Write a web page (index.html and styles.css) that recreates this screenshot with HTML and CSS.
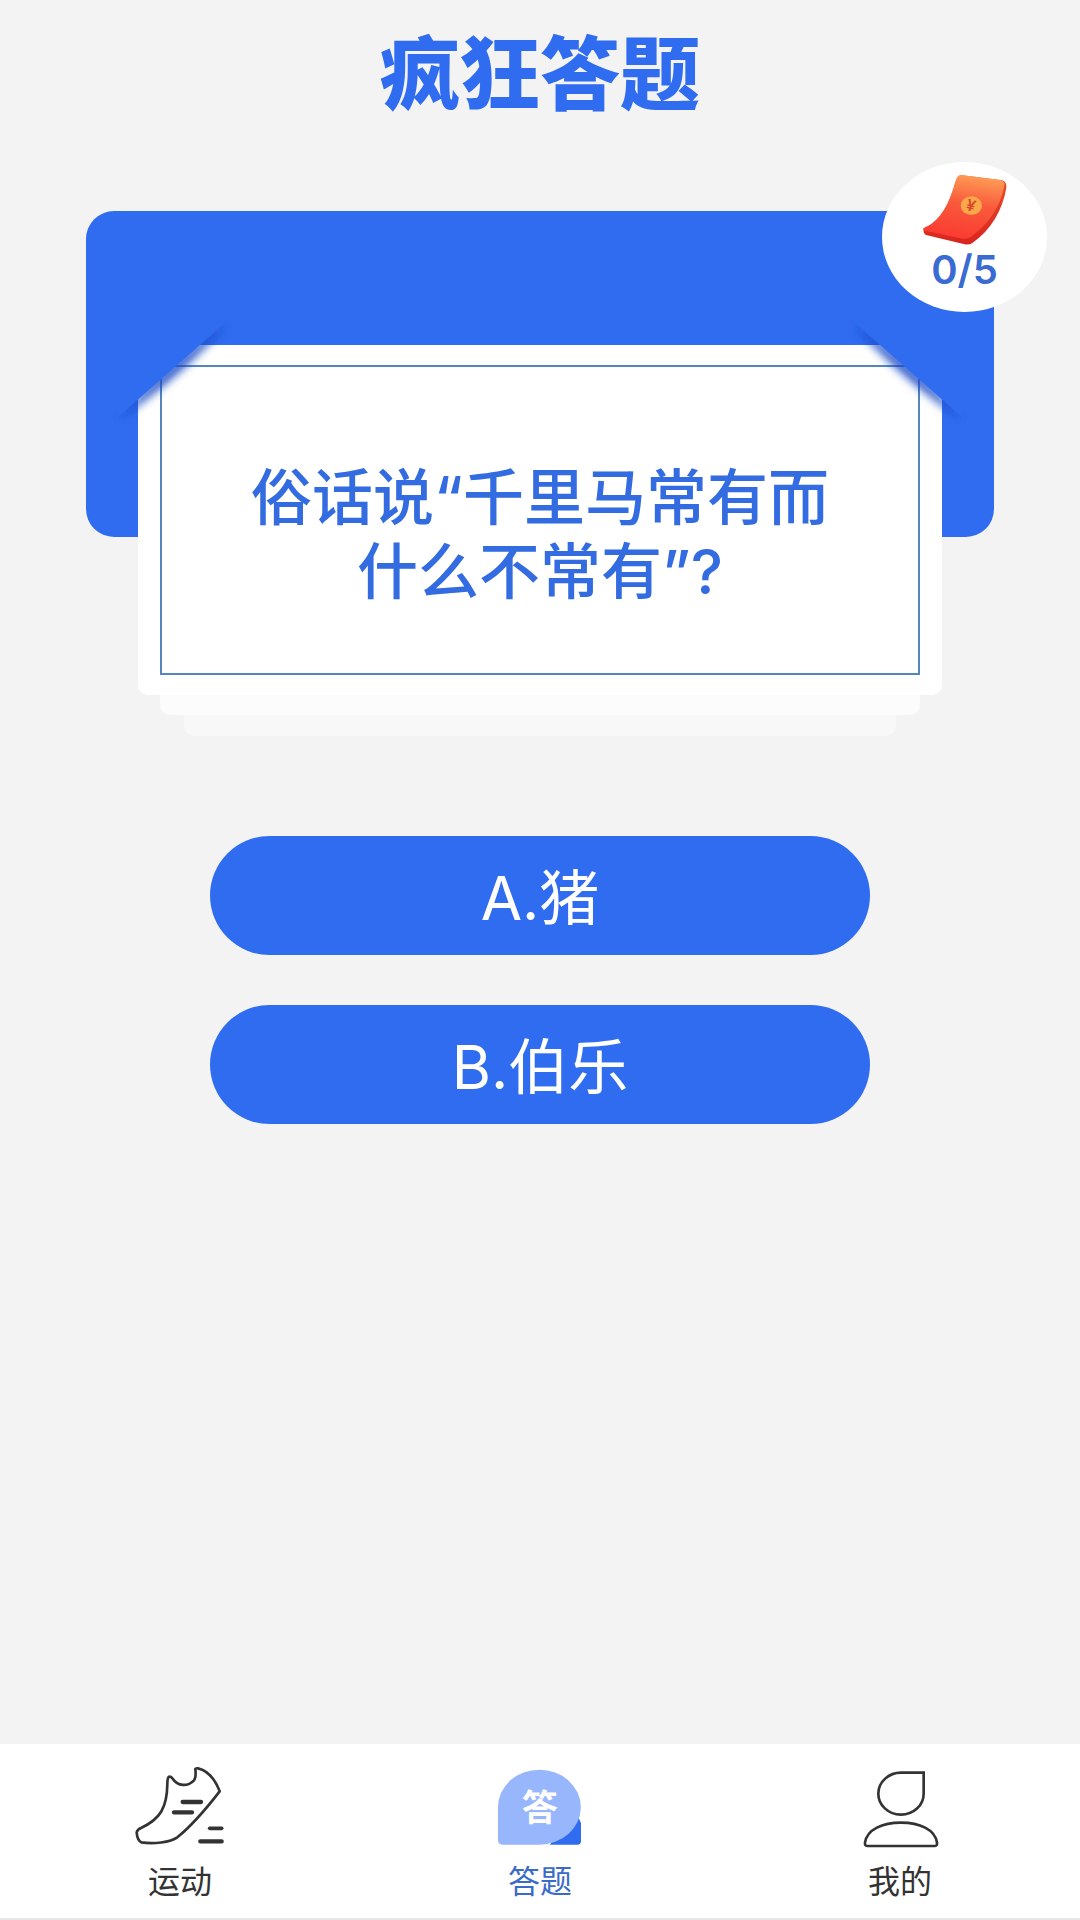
FILE: index.html
```html
<!DOCTYPE html>
<html lang="zh-CN">
<head>
    <meta charset="UTF-8">
    <meta name="viewport" content="width=device-width, initial-scale=1.0">
    <title>疯狂答题</title>
    <link rel="stylesheet" href="styles.css">
</head>
<body>
    <h1>疯狂答题</h1>

    <main>
        <section class="quiz">
            <div class="backdrop"></div>
            <div class="stack">
                <div class="card">
                    <p class="question">俗话说“千里马常有而<br>什么不常有”?</p>
                </div>
                <div class="sheet"></div>
                <div class="sheet sheet-last"></div>
            </div>

            <!-- slots that hold the card corners -->
            <svg class="corner corner-left" viewBox="0 0 130 120" aria-hidden="true">
                <defs>
                    <filter id="soft" x="-20%" y="-20%" width="140%" height="140%">
                        <feGaussianBlur stdDeviation="4"/>
                    </filter>
                </defs>
                <path d="M118 8 Q71 62 7 106 Q54 48 118 8Z" fill="#1548c4" fill-opacity="0.9" filter="url(#soft)"/>
                <path d="M115 8 L7 103 V8Z" fill="#306cf0"/>
            </svg>
            <svg class="corner corner-right" viewBox="0 0 130 120" aria-hidden="true">
                <path d="M118 8 Q71 62 7 106 Q54 48 118 8Z" fill="#1548c4" fill-opacity="0.9" filter="url(#soft)"/>
                <path d="M115 8 L7 103 V8Z" fill="#306cf0"/>
            </svg>

            <div class="badge">
                <svg class="packet" viewBox="180 70 270 222" aria-hidden="true">
                    <defs>
                        <linearGradient id="face" x1="0.6" y1="0" x2="0.4" y2="1">
                            <stop offset="0" stop-color="#ff9c55"/>
                            <stop offset="0.45" stop-color="#f95a3c"/>
                            <stop offset="1" stop-color="#fb3a31"/>
                        </linearGradient>
                        <linearGradient id="edge" x1="0" y1="0" x2="0" y2="1">
                            <stop offset="0" stop-color="#e8502c"/>
                            <stop offset="1" stop-color="#d8241f"/>
                        </linearGradient>
                    </defs>
                    <path d="M300 76 L426 92 Q441 97 439 114 C428 180 394 240 337 280 Q328 286 314 284 L198 256 Q190 253 190 236 C240 220 275 150 285 100Z" fill="url(#edge)"/>
                    <path d="M304 76 L422 91 Q436 95 433 110 C420 174 384 226 332 262 Q322 269 308 267 L196 243 Q188 239 193 234 C246 216 270 150 286 97 Q291 74 304 76Z" fill="url(#face)"/>
                    <ellipse cx="334" cy="168" rx="32" ry="28" fill="#f9a94a"/>
                    <text x="333" y="185" class="yen" transform="rotate(16 333 168)">¥</text>
                </svg>
                <span>0/5</span>
            </div>
        </section>

        <div class="answers">
            <button type="button">A.猪</button>
            <button type="button">B.伯乐</button>
        </div>
    </main>

    <nav>
        <a href="#sport">
            <svg viewBox="60 70 300 255" aria-hidden="true">
                <g fill="none" stroke="#333" stroke-width="8" stroke-linejoin="round" stroke-linecap="round">
                    <path d="M176 112 Q181 109 188 117 C203 140 233 142 252 122 Q259 114 256 88 Q257 85 264 86 C295 93 316 121 329 155 C302 190 246 257 202 293 C181 308 130 314 94 308 Q82 302 80 279 Q81 270 93 265 C152 238 171 202 172 134 Q172 116 176 112Z"/>
                    <path d="M218 187 H273 M192 218 H246 M271 305 H335" stroke-width="13"/>
                    <path d="M299 266 H335" stroke-width="11"/>
                </g>
            </svg>
            <span>运动</span>
        </a>
        <a href="#quiz" class="active">
            <svg viewBox="60 70 300 255" aria-hidden="true">
                <path d="M240 315 H322 Q333 315 333 304 V250 L326 235 L280 250Z" fill="#306cf0"/>
                <path d="M208 90 A124 112 0 0 1 208 315 H98 Q84 315 84 301 V202 A124 112 0 0 1 208 90Z" fill="#98b6fb"/>
                <text x="209" y="243" class="bubble-text">答</text>
            </svg>
            <span>答题</span>
        </a>
        <a href="#mine">
            <svg viewBox="60 70 300 255" aria-hidden="true">
                <g fill="none" stroke="#333" stroke-width="8" stroke-linejoin="round">
                    <path d="M281 99 H214 A68 63 0 1 0 281 162Z" stroke-linejoin="miter"/>
                    <path d="M111 319 Q104 319 105 309 C111 269 158 249 213 249 C268 249 315 269 321 309 Q322 319 315 319Z"/>
                </g>
            </svg>
            <span>我的</span>
        </a>
    </nav>
</body>
</html>
```
FILE: styles.css
```css
* {
    box-sizing: border-box;
}

body {
    margin: 0;
    min-height: 100vh;
    display: flex;
    flex-direction: column;
    background-color: #f3f3f3;
    font-family: Inter, "Noto Sans CJK SC", sans-serif;
}

h1 {
    margin: 24px 0 87px;
    font-size: 80px;
    line-height: 100px;
    font-weight: 900;
    text-align: center;
    color: #306cf0;
}

/* question card */
.quiz {
    position: relative;
    display: grid;
    margin: 0 86px;
}

.backdrop {
    grid-area: 1 / 1;
    height: 326px;
    border-radius: 28px;
    background-color: #306cf0;
}

.stack {
    grid-area: 1 / 1;
    margin: 134px 52px 0;
}

.card {
    padding: 20px 22px;
    border-radius: 10px;
    background-color: #fff;
}

.question {
    display: flow-root;
    margin: 0;
    padding: 94px 20px 64px;
    border: 2px solid #5585bd;
    font-size: 61px;
    line-height: 74px;
    font-weight: 500;
    text-align: center;
    color: #336be0;
}

.sheet {
    height: 20px;
    margin: 0 22px;
    border-radius: 0 0 10px 10px;
    background-color: #fcfcfc;
}

.sheet-last {
    height: 21px;
    margin: 0 46px;
    background-color: #f8f8f8;
}

.corner {
    position: absolute;
    top: 104px;
    width: 130px;
    height: 120px;
}

.corner-left {
    left: 24px;
}

.corner-right {
    right: 24px;
    transform: scaleX(-1);
}

.badge {
    position: absolute;
    top: -49px;
    right: -53px;
    display: flex;
    flex-direction: column;
    align-items: center;
    width: 165px;
    height: 150px;
    padding-top: 11px;
    border-radius: 50%;
    background-color: #fff;
    font-size: 40px;
    line-height: 46px;
    font-weight: 600;
    color: #3a6bd2;
}

.packet {
    width: 90px;
    height: 74px;
}

.yen {
    font-size: 48px;
    font-weight: 600;
    text-anchor: middle;
    fill: #d9482a;
}

/* answers */
.answers {
    display: flex;
    flex-direction: column;
    gap: 50px;
    margin: 100px 210px;
}

.answers button {
    height: 119px;
    padding: 0 0 4px;
    border: 0;
    border-radius: 64px;
    background-color: #306cf0;
    font-family: inherit;
    font-size: 60px;
    color: #fff;
}

/* bottom tabs */
nav {
    display: flex;
    margin-top: auto;
    padding: 19px 0 12px;
    border-bottom: 2px solid #e6e6e6;
    background-color: #fff;
}

nav a {
    flex: 1;
    display: flex;
    flex-direction: column;
    align-items: center;
    gap: 10px;
    font-size: 32px;
    line-height: 48px;
    color: #333;
    text-decoration: none;
}

nav a.active {
    color: #3a6bc8;
}

nav svg {
    width: 100px;
    height: 85px;
}

.bubble-text {
    font-size: 108px;
    font-weight: 700;
    text-anchor: middle;
    fill: #fff;
}
```
